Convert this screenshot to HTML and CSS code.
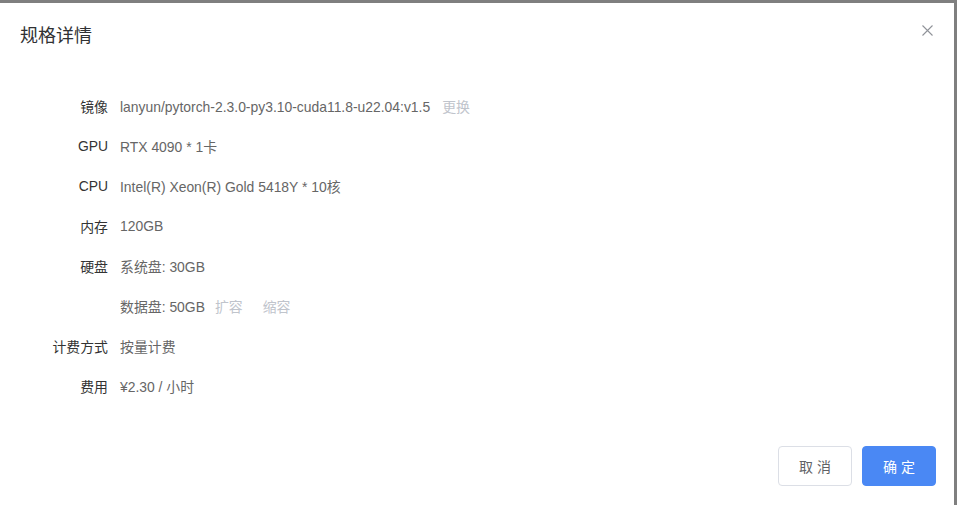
FILE: index.html
```html
<!DOCTYPE html>
<html lang="zh">
<head>
<meta charset="utf-8">
<link rel="stylesheet" href="styles.css">
</head>
<body>
<div class="dialog">
  <div class="header">
    <div class="title">规格详情</div>
    <svg class="close" width="11" height="11" viewBox="0 0 11 11"><path d="M0.5 0.5L10.5 10.5M10.5 0.5L0.5 10.5" stroke="#909399" stroke-width="1.1" fill="none"/></svg>
  </div>
  <div class="body">
    <div class="row"><div class="label">镜像</div><div class="value">lanyun/pytorch-2.3.0-py3.10-cuda11.8-u22.04:v1.5<span class="link first">更换</span></div></div>
    <div class="row"><div class="label">GPU</div><div class="value">RTX 4090 * 1卡</div></div>
    <div class="row"><div class="label">CPU</div><div class="value">Intel(R) Xeon(R) Gold 5418Y * 10核</div></div>
    <div class="row"><div class="label">内存</div><div class="value">120GB</div></div>
    <div class="row"><div class="label">硬盘</div><div class="value">系统盘: 30GB</div></div>
    <div class="row"><div class="label"></div><div class="value">数据盘: 50GB<span class="link disk">扩容</span><span class="link second">缩容</span></div></div>
    <div class="row"><div class="label">计费方式</div><div class="value">按量计费</div></div>
    <div class="row"><div class="label">费用</div><div class="value">¥2.30 / 小时</div></div>
  </div>
  <div class="footer">
    <button class="btn cancel">取 消</button>
    <button class="btn primary">确 定</button>
  </div>
</div>
</body>
</html>
```
FILE: styles.css
```css
html, body {
  margin: 0;
  padding: 0;
  height: 100%;
}
body {
  background: #7f7f7f;
  font-family: "Liberation Sans", "Noto Sans CJK SC", sans-serif;
  overflow: hidden;
}
.dialog {
  margin-top: 3px;
  width: 954px;
  height: 502px;
  background: #fff;
  display: flex;
  flex-direction: column;
  box-sizing: border-box;
}
.header {
  height: 66px;
  display: flex;
  align-items: center;
  justify-content: space-between;
  padding: 0 21px 0 20px;
}
.title {
  font-size: 18px;
  color: #303133;
  line-height: 24px;
}
.close {
  display: block;
  margin-top: -11px;
}
.body {
  padding-top: 17px;
  padding-left: 20px;
  flex: 1;
}
.row {
  display: flex;
  height: 40px;
  align-items: center;
  font-size: 13.9px;
}
.label {
  width: 88px;
  text-align: right;
  color: #333;
  padding-right: 12px;
  box-sizing: content-box;
}
.value {
  color: #666;
}
.link {
  color: #c0c4cc;
}
.link.first {
  margin-left: 12px;
}
.link.disk {
  margin-left: 10px;
}
.link.second {
  margin-left: 20px;
}
.footer {
  display: flex;
  justify-content: flex-end;
  gap: 10px;
  padding: 0 18px 19px 0;
}
.btn {
  width: 74px;
  height: 40px;
  border-radius: 4px;
  font-size: 14px;
  font-family: "Liberation Sans", "Noto Sans CJK SC", sans-serif;
  cursor: pointer;
  padding: 0;
}
.cancel {
  background: #fff;
  border: 1px solid #dcdfe6;
  color: #606266;
}
.primary {
  background: #4a88f4;
  border: 1px solid #4a88f4;
  color: #fff;
}
```
